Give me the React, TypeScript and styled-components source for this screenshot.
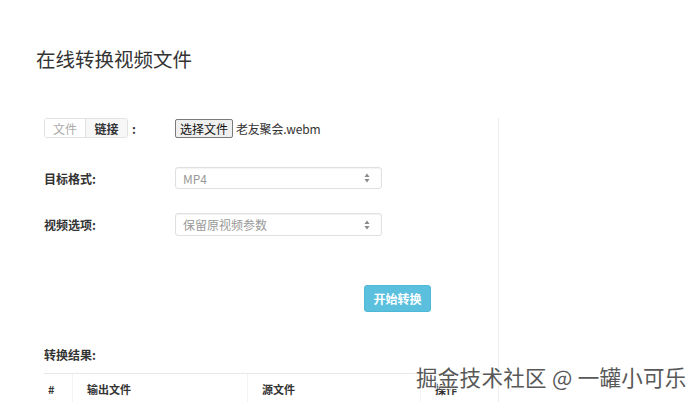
import React from "react";
import styled, { createGlobalStyle } from "styled-components";

const Global = createGlobalStyle`
  html, body { margin: 0; padding: 0; background: #fff; }
  body { font-family: "Noto Sans CJK SC", "Liberation Sans", sans-serif; color: #333; }
  * { box-sizing: border-box; }
`;

const Page = styled.div`
  position: relative;
  width: 700px;
  height: 402px;
  overflow: hidden;
`;

const Title = styled.h1`
  margin: 44px 0 0 36px;
  font-size: 19.5px;
  line-height: 30px;
  font-weight: 400;
  color: #333;
`;

const Main = styled.div`
  display: flex;
  margin: 44px 0 0 36px;
`;

const LeftCol = styled.div`
  width: 463px;
  min-height: 320px;
  border-right: 1px solid #eeeeee;
  padding-left: 8px;
  display: flex;
  flex-direction: column;
`;

const Row = styled.div<{ $top?: number; $h?: number }>`
  display: flex;
  align-items: center;
  margin-top: ${(p) => p.$top ?? 0}px;
  height: ${(p) => p.$h ?? 22}px;
`;

const Label = styled.div`
  width: 131px;
  font-size: 12px;
  font-weight: 700;
  color: #333;
  display: flex;
  align-items: center;
`;

const Tabs = styled.div`
  display: flex;
  height: 20px;
  border: 1px solid #e2e2e2;
  border-radius: 3px;
  overflow: hidden;
`;

const Tab = styled.div<{ $active?: boolean }>`
  display: flex;
  align-items: center;
  justify-content: center;
  width: ${(p) => (p.$active ? 42 : 40)}px;
  font-size: 12px;
  font-weight: ${(p) => (p.$active ? 700 : 400)};
  color: ${(p) => (p.$active ? "#333" : "#aaa")};
  background: ${(p) => (p.$active ? "#f7f7f7" : "#fff")};
  & + & { border-left: 1px solid #e2e2e2; }
`;

const Colon = styled.span`
  margin-left: 4px;
  font-size: 12px;
  font-weight: 700;
`;

const FileButton = styled.button`
  height: 19px;
  padding: 0 4px;
  margin: 0;
  font-family: "Noto Sans CJK SC", sans-serif;
  font-size: 12px;
  line-height: 17px;
  color: #111;
  background: #efefef;
  border: 1px solid #7a7a7a;
  border-radius: 2px;
`;

const FileName = styled.span`
  margin-left: 3px;
  font-size: 12px;
  letter-spacing: -0.2px;
  color: #333;
`;

const Select = styled.div`
  width: 207px;
  height: 100%;
  border: 1px solid #e0e0e0;
  border-radius: 3px;
  box-shadow: inset 0 1px 1px rgba(0, 0, 0, 0.05);
  display: flex;
  align-items: center;
  justify-content: space-between;
  padding: 0 11px 0 7px;
  font-size: 12px;
  color: #999;
`;

const Arrows = styled.svg`
  width: 6px;
  height: 10px;
`;

const StartButton = styled.button`
  margin-left: 320px;
  width: 67px;
  height: 27px;
  border: 1px solid #4fb8d6;
  border-radius: 3px;
  background: #5bc0de;
  color: #fff;
  font-family: "Noto Sans CJK SC", sans-serif;
  font-size: 12px;
  font-weight: 700;
  padding: 0;
`;

const SectionTitle = styled.div`
  margin-top: 34px;
  font-size: 12px;
  font-weight: 700;
  line-height: 18px;
  color: #333;
`;

const Table = styled.div`
  margin-top: 9px;
  width: 446px;
  border-top: 1px solid #e8e8e8;
  display: grid;
  grid-template-columns: 28px 175px 173px 70px;
`;

const Th = styled.div<{ $first?: boolean }>`
  height: 29px;
  display: flex;
  align-items: center;
  padding-left: ${(p) => (p.$first ? 4 : 14)}px;
  font-size: 11px;
  font-weight: 700;
  color: #333;
  border-left: ${(p) => (p.$first ? "none" : "1px solid #f4f4f4")};
`;

const Watermark = styled.div`
  position: absolute;
  left: 416px;
  top: 362px;
  font-size: 21.5px;
  line-height: 30px;
  color: #585858;
  font-weight: 400;
  letter-spacing: 0.3px;
  white-space: nowrap;
  text-shadow: 0 0 2px #fff, 1px 1px 1px #fff, -1px -1px 1px #fff;
`;

const SelectArrows = () => (
  <Arrows viewBox="0 0 6 10">
    <path d="M3 0.5 L5.5 4 L0.5 4 Z" fill="#888" />
    <path d="M3 9.5 L5.5 6 L0.5 6 Z" fill="#888" />
  </Arrows>
);

export default function App() {
  return (
    <Page>
      <Global />
      <Title>在线转换视频文件</Title>
      <Main>
        <LeftCol>
          <Row $h={20}>
            <Label>
              <Tabs>
                <Tab>文件</Tab>
                <Tab $active>链接</Tab>
              </Tabs>
              <Colon>:</Colon>
            </Label>
            <FileButton>选择文件</FileButton>
            <FileName>老友聚会.webm</FileName>
          </Row>
          <Row $top={29} $h={22}>
            <Label>目标格式:</Label>
            <Select>
              <span>MP4</span>
              <SelectArrows />
            </Select>
          </Row>
          <Row $top={24} $h={23}>
            <Label>视频选项:</Label>
            <Select>
              <span>保留原视频参数</span>
              <SelectArrows />
            </Select>
          </Row>
          <Row $top={49} $h={27}>
            <StartButton>开始转换</StartButton>
          </Row>
          <SectionTitle>转换结果:</SectionTitle>
          <Table>
            <Th $first>#</Th>
            <Th>输出文件</Th>
            <Th>源文件</Th>
            <Th>操作</Th>
          </Table>
        </LeftCol>
      </Main>
      <Watermark>掘金技术社区 @ 一罐小可乐</Watermark>
    </Page>
  );
}
